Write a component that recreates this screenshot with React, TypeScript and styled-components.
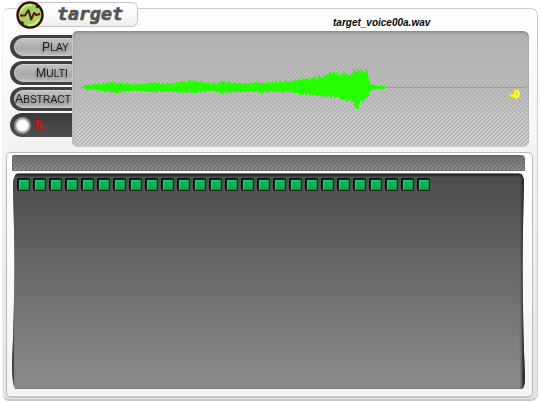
import React from "react";
import styled, { createGlobalStyle, css } from "styled-components";

const GlobalStyle = createGlobalStyle`
  html, body, #root { margin: 0; padding: 0; width: 541px; height: 402px; overflow: hidden; background: #fff; }
  * { box-sizing: border-box; }
`;

const stripes = (color: string) => css`
  background-image: linear-gradient(135deg, ${color} 25%, transparent 25% 50%, ${color} 50% 75%, transparent 75%),
    var(--shade);
  background-size: 4px 4px, 100% 100%;
`;

const Page = styled.div`
  width: 541px;
  height: 402px;
  padding: 8px 2px 1px;
  background: #fff;
`;

const Shell = styled.main`
  position: relative;
  width: 536px;
  height: 393px;
  padding: 22px 7px 0 4px;
  border: 1px solid #cdcdcd;
  border-left-color: #f0f0f0;
  border-bottom: 2px solid #c9c9c9;
  border-radius: 7px;
  background: linear-gradient(#fff 0, #f7f7f7 90px, #ececec 240px, #e4e4e4);
`;

const TitleTab = styled.header`
  position: absolute;
  left: 14px;
  top: -7px;
  width: 121px;
  height: 25px;
  border: 1px solid #c6c6c6;
  border-left: 0;
  border-radius: 6px;
  background: linear-gradient(#fff, #fafafa 50%, #ededed);
`;

const Emblem = styled.svg`
  position: absolute;
  left: -2px;
  top: -3px;
  width: 30px;
  height: 30px;
`;

const Wordmark = styled.svg`
  position: absolute;
  left: 38px;
  top: 0;
  width: 74px;
  height: 23px;
`;

const FileName = styled.div`
  position: absolute;
  left: 330px;
  top: 8px;
  width: 100px;
  font: italic bold 10px/12px "Liberation Sans", Arial, sans-serif;
  color: #050505;
  white-space: nowrap;
`;

const Deck = styled.section`
  display: flex;
  height: 116px;
  margin-left: 3px;
`;

const Controls = styled.nav`
  display: flex;
  flex-direction: column;
  gap: 2px;
  width: 62px;
  padding-top: 4px;
`;

const Pill = styled.div`
  display: flex;
  align-items: center;
  width: 62px;
  height: 24px;
  padding: 3px 0 3px 4px;
  border-radius: 12px 0 0 12px;
  background: #404040;
`;

const PillButton = styled.button`
  position: relative;
  z-index: 1;
  flex: none;
  display: flex;
  align-items: center;
  justify-content: flex-end;
  width: 59px;
  height: 18px;
  padding: 0;
  border: 1px solid #c9cfcf;
  border-top-color: #d2d2d2;
  border-bottom-color: #b5d3d8;
  border-radius: 9px 3px 3px 9px;
  background: linear-gradient(#c0c0c0, #aaa 60%, #b9bfc0);
`;

const Caption = styled.svg`
  flex: none;
  width: 58px;
  height: 16px;
  overflow: visible;
  filter: drop-shadow(-1px 2px 1px #666b);
`;

const Status = styled(Pill)`
  padding: 0 0 0 4px;
  gap: 4px;
  background: linear-gradient(#393939, #505050);
`;

const Lamp = styled.span`
  width: 17px;
  height: 17px;
  border: 2px solid #999;
  border-radius: 50%;
  background: #fff;
  box-shadow: inset 0 0 2px #999;
`;

const Count = styled.span`
  font: bold 13px/16px "Liberation Sans", Arial, sans-serif;
  color: #f00505;
`;

const Scope = styled.div`
  position: relative;
  width: 457px;
  height: 116px;
  border-left: 1px solid #b8c5bb;
  border-bottom: 1px solid #c2c7c4;
  border-radius: 5px 6px 6px 5px;
  box-shadow: inset 0 2px 2px #77777799;
  --shade: linear-gradient(#b8b8b8, #c1c1c1 50%, #d2d4d3);
  ${stripes("#9d9d9d88")}
`;

const Wave = styled.svg`
  position: absolute;
  left: -1px;
  top: 0;
  width: 457px;
  height: 116px;
`;

const Gain = styled.span`
  position: absolute;
  right: 10px;
  top: 57px;
  font: bold 11px/12px "Liberation Sans", Arial, sans-serif;
  color: #ff0;
  -webkit-text-stroke: 0.9px #ff0;
  letter-spacing: -0.4px;
`;

const Workbench = styled.section`
  width: 527px;
  height: 246px;
  margin: 5px 0 0 -1px;
  padding: 2px 5px 5px;
  display: flex;
  flex-direction: column;
  gap: 2px;
  border: 1px solid #bababa;
  border-bottom: 2px solid #c6c6c6;
  border-radius: 5px;
  background: linear-gradient(#fff, #f4f4f4);
`;

const Strip = styled.div`
  flex: none;
  width: 513px;
  height: 16px;
  border: 1px solid #707070;
  border-top-color: #606460;
  border-radius: 2px 4px 1px 1px;
  --shade: linear-gradient(#737373, #939393);
  ${stripes("#55555577")}
`;

const Bed = styled.div`
  flex: none;
  display: flex;
  align-items: flex-start;
  gap: 3px;
  width: 513px;
  height: 216px;
  padding: 4px 0 0 5px;
  border-top: 1px solid #777;
  clip-path: path("M6 0H507Q511 1 512 7Q509 115 513 205Q513 214 510 216H3Q0 210 0 190Q4 110 1 10Q2 1 6 0Z");
  box-shadow: inset 0 2px 2px #292929, inset -4px 0 3px -1px #222, inset 3px 0 1px -1px #444;
  --shade: linear-gradient(#4b4b4b, #515151 15%, #747474 58%, #929292);
  ${stripes("#60606044")}
`;

const Cell = styled.i`
  flex: none;
  width: 13px;
  height: 13px;
  border: solid #161b18;
  border-width: 2px 1px 1px 2px;
  border-radius: 2px;
  background: linear-gradient(#10bd5c, #05a849);
  box-shadow: inset 1px 1px #1bd36c, inset -1px -1px #078f40;
`;

const envelope: [number, number, number][] = [
  [80, 0.5, 0.5], [84, 0.7, 0.6], [85, 2, 1.9], [96, 3, 2.4], [103, 3.8, 3.2], [111, 5.4, 5.5],
  [121, 4.6, 4.4], [132, 3, 3.3], [145, 4.2, 3.5], [155, 5.6, 4.6], [163, 3.8, 3.6], [176, 5, 4.5],
  [188, 7.5, 5.8], [200, 5.8, 4.4], [212, 4, 3.5], [222, 6.4, 5.4], [236, 4.6, 4.6], [250, 4.6, 4.5],
  [275, 5.3, 4.7], [288, 7, 5], [299, 8.6, 7], [312, 10.5, 8.5], [325, 13, 9.5], [336, 16, 10],
  [343, 16, 12], [350, 15, 16], [354, 19, 21], [356, 20, 25], [358, 21, 25], [360, 19, 17], [365, 19, 13],
  [368, 14, 9], [370, 4, 3], [374, 2, 1], [380, 1, 1.5], [385, 0.5, 0.5],
];

function buildWave() {
  let upper = "M8 56.5";
  const lower: string[] = [];
  for (let x = 80; x < 385; x++) {
    const i = Math.max(1, envelope.findIndex((e) => e[0] > x));
    const [x0, a0, b0] = envelope[i - 1];
    const [x1, a1, b1] = envelope[i];
    const t = (x - x0) / (x1 - x0);
    const n1 = Math.abs(Math.sin(x * 12.9898) * 43758.5453) % 1;
    const n2 = Math.abs(Math.sin(x * 78.233) * 12543.123) % 1;
    const top = Math.max(0.5, Math.round((a0 + (a1 - a0) * t) * (0.7 + n1 * 0.35)) + 0.5);
    const bottom = Math.max(0.5, Math.round((b0 + (b1 - b0) * t) * (0.7 + n2 * 0.35)) + 0.5);
    const flat = x < 84;
    const l = x - 72;
    upper += `V${56.5 - (flat ? 0.5 : top)}H${l + 1}`;
    lower.unshift(`L${l + 1} ${56.5 + (flat ? 0.5 : bottom)}H${l}`);
  }
  return upper + lower.join("") + "Z";
}

const wavePath = buildWave();
const cells = Array.from({ length: 26 }, (_, i) => i);
const buttons = [
  { label: "PLAY", start: 28, width: 27 },
  { label: "MULTI", start: 22, width: 32 },
  { label: "ABSTRACT", start: 1, width: 56 },
];

export default function App() {
  return (
    <>
      <GlobalStyle />
      <Page>
        <Shell>
          <TitleTab>
            <Wordmark viewBox="0 0 74 23">
              <text x="2" y="17" textLength="66" lengthAdjust="spacingAndGlyphs" fontFamily="DejaVu Sans Mono, monospace" fontSize="18" fontStyle="italic" fontWeight="700" fill="#555" stroke="#555" strokeWidth="0.7">target</text>
            </Wordmark>
            <Emblem viewBox="0 0 30 30">
              <circle cx="15" cy="15" r="12.5" fill="#a1d160" stroke="#3c0a08" strokeWidth="2.4" />
              <path d="M6 11A10 10 0 0 1 17 5M24 19A10 10 0 0 1 13 25" fill="none" stroke="#c7ee87" strokeWidth="2.2" />
              <path d="M5 15.5h5l3.5-5.5 2.6 9.5 3-6.5 2 2 4-1" fill="none" stroke="#551713" strokeWidth="2" strokeLinejoin="round" />
              <circle cx="22.5" cy="6.5" r="1.8" fill="#4b100d" />
              <circle cx="7" cy="23" r="1.8" fill="#4b100d" />
            </Emblem>
          </TitleTab>
          <FileName>target_voice00a.wav</FileName>
          <Deck>
            <Controls>
              {buttons.map((b) => (
                <Pill key={b.label}>
                  <PillButton>
                    <Caption viewBox="0 0 58 16">
                      <text x={b.start} y="11.5" textLength={b.width} lengthAdjust="spacingAndGlyphs" fontFamily="Liberation Sans, Arial, sans-serif" fill="#1c1c1c" fontSize="10">
                        <tspan fontSize="12">{b.label[0]}</tspan>{b.label.slice(1)}
                      </text>
                    </Caption>
                  </PillButton>
                </Pill>
              ))}
              <Status><Lamp /><Count>5.</Count></Status>
            </Controls>
            <Scope>
              <Wave viewBox="0 0 457 116">
                <path d="M8 56.5H454" stroke="#39e91e" strokeWidth="1" />
                <path d={wavePath} fill="#26ff00" />
              </Wave>
              <Gain>-0</Gain>
            </Scope>
          </Deck>
          <Workbench>
            <Strip />
            <Bed>{cells.map((i) => <Cell key={i} />)}</Bed>
          </Workbench>
        </Shell>
      </Page>
    </>
  );
}
